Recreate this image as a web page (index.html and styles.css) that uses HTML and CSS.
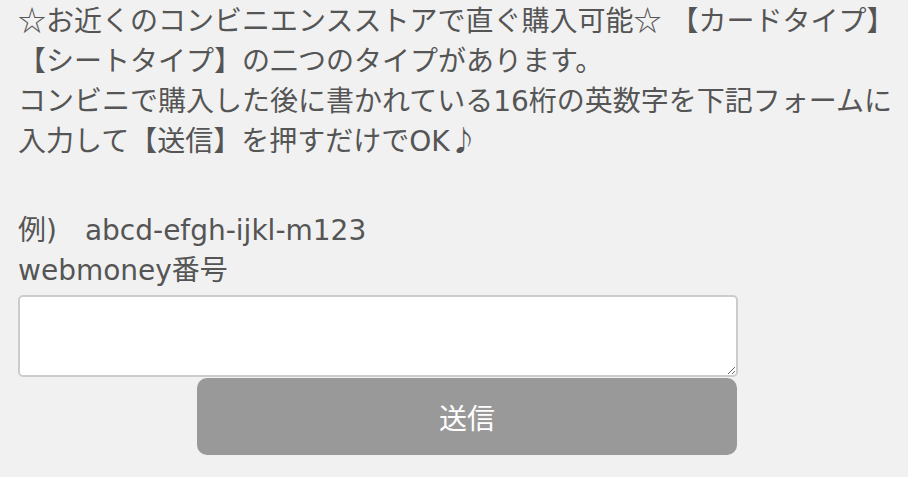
FILE: index.html
```html
<!DOCTYPE html>
<html lang="ja">
<head>
    <meta charset="UTF-8">
    <meta name="viewport" content="width=device-width, initial-scale=1.0">
    <title>webmoney</title>
    <link rel="stylesheet" href="styles.css">
</head>
<body>
    <div class="content">
        <p class="intro"><span class="mark">☆</span>お近くのコンビニエンスストアで直ぐ購入可能<span class="mark">☆</span> 【カードタイプ】【シートタイプ】の二つのタイプがあります。<br>コンビニで購入した後に書かれている16桁の英数字を下記フォームに入力して【送信】を押すだけでOK<span class="mark">♪</span></p>
        <p class="example">例)　abcd-efgh-ijkl-m123</p>
        <form class="form" onsubmit="return false;">
            <label class="label" for="code">webmoney番号</label>
            <textarea id="code" class="code"></textarea>
            <button class="submit" type="submit">送信</button>
        </form>
    </div>
</body>
</html>
```

FILE: styles.css
```css
body {
    margin: 0;
    background-color: #f1f1f1;
    color: #555555;
    font-family: "DejaVu Sans", "Noto Sans CJK JP", sans-serif;
    font-size: 28px;
    line-height: 40px;
}
.content {
    padding: 2px 6px 0 18px;
}
.intro {
    margin: 0 0 9px 0;
}
.intro::after {
    content: "";
    display: block;
    height: 40px;
}
.mark {
    font-family: "Noto Sans CJK JP", sans-serif;
    line-height: 1;
}
.example {
    margin: 0;
}
.form {
    width: 720px;
}
.label {
    display: block;
}
.code {
    display: block;
    box-sizing: border-box;
    width: 720px;
    height: 82px;
    margin: 4px 0 0 0;
    border: 2px solid #cccccc;
    border-radius: 5px;
    background-color: #ffffff;
    font-family: inherit;
    font-size: 20px;
}
.submit {
    display: block;
    width: 540px;
    height: 77px;
    margin: 1px 0 0 179px;
    border: none;
    border-radius: 10px;
    background-color: #999999;
    color: #ffffff;
    font-family: "Noto Sans CJK JP", sans-serif;
    font-size: 28px;
    cursor: pointer;
}
```
